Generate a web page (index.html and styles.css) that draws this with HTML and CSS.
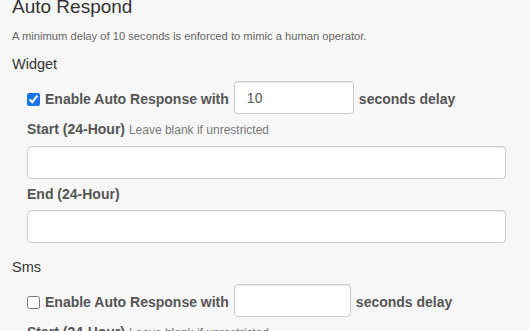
FILE: index.html
```html
<!DOCTYPE html>
<html lang="en">
<head>
    <meta charset="UTF-8">
    <meta name="viewport" content="width=device-width, initial-scale=1.0">
    <title>Auto Respond</title>
    <link rel="stylesheet" href="styles.css">
</head>
<body>
    <div class="settings">
        <h2 class="title">Auto Respond</h2>
        <p class="note">A minimum delay of 10 seconds is enforced to mimic a human operator.</p>

        <h4 class="channel">Widget</h4>
        <div class="channel-body">
            <div class="delay-row">
                <input type="checkbox" id="widgetEnabled" checked>
                <label for="widgetEnabled" class="delay-label">Enable Auto Response with</label>
                <input type="text" class="form-control delay-input" value="10">
                <span class="delay-label">seconds delay</span>
            </div>
            <div class="form-group">
                <label for="widgetStart">Start (24-Hour) <small>Leave blank if unrestricted</small></label>
                <input type="text" id="widgetStart" class="form-control">
            </div>
            <div class="form-group">
                <label for="widgetEnd">End (24-Hour)</label>
                <input type="text" id="widgetEnd" class="form-control">
            </div>
        </div>

        <h4 class="channel channel-next">Sms</h4>
        <div class="channel-body">
            <div class="delay-row">
                <input type="checkbox" id="smsEnabled">
                <label for="smsEnabled" class="delay-label">Enable Auto Response with</label>
                <input type="text" class="form-control delay-input sms-input" value="">
                <span class="delay-label">seconds delay</span>
            </div>
            <div class="form-group">
                <label for="smsStart">Start (24-Hour) <small>Leave blank if unrestricted</small></label>
                <input type="text" id="smsStart" class="form-control">
            </div>
            <div class="form-group">
                <label for="smsEnd">End (24-Hour)</label>
                <input type="text" id="smsEnd" class="form-control">
            </div>
        </div>
    </div>
</body>
</html>
```

FILE: styles.css
```css
* {
    font-family: "Liberation Sans", Arial, sans-serif;
    box-sizing: border-box;
}
body {
    margin: 0;
    background-color: #f7f7f7;
    color: #333;
}
.settings {
    padding: 0 23px 0 12px;
}
.title {
    font-size: 19px;
    font-weight: normal;
    line-height: 21px;
    margin: -4px 0 0;
}
.note {
    font-size: 11.2px;
    line-height: 16px;
    color: #666;
    margin: 11px 0 0;
}
.channel {
    font-size: 14.5px;
    font-weight: normal;
    line-height: 18px;
    margin: 11px 0 0;
}
.channel-next {
    margin-top: 15px;
}
.channel-body {
    padding-left: 15px;
    margin-top: 8px;
}

.form-control {
    display: block;
    width: 100%;
    height: 33px;
    padding: 6px 12px;
    font-size: 14px;
    line-height: 20px;
    color: #555;
    background-color: #fff;
    border: 1px solid #ccc;
    border-radius: 4px;
    box-shadow: inset 0 1px 1px rgba(0, 0, 0, 0.075);
}

.delay-row {
    display: flex;
    align-items: center;
    gap: 5px;
}
.delay-row input[type="checkbox"] {
    flex: none;
    width: 13px;
    height: 13px;
    margin: 4px 0 0;
    accent-color: #1a73e8;
}
.delay-label {
    font-size: 14px;
    font-weight: bold;
    line-height: 20px;
    color: #555;
    padding-top: 3px;
    white-space: nowrap;
}
.delay-row .delay-input {
    flex: none;
    width: 120px;
}
.delay-row .sms-input {
    width: 117px;
}

.form-group {
    margin-top: 5px;
}
.form-group label {
    display: block;
    font-size: 14px;
    font-weight: bold;
    line-height: 20px;
    color: #555;
    margin-bottom: 6px;
}
.form-group small {
    font-size: 12px;
    font-weight: normal;
    color: #777;
}
```
